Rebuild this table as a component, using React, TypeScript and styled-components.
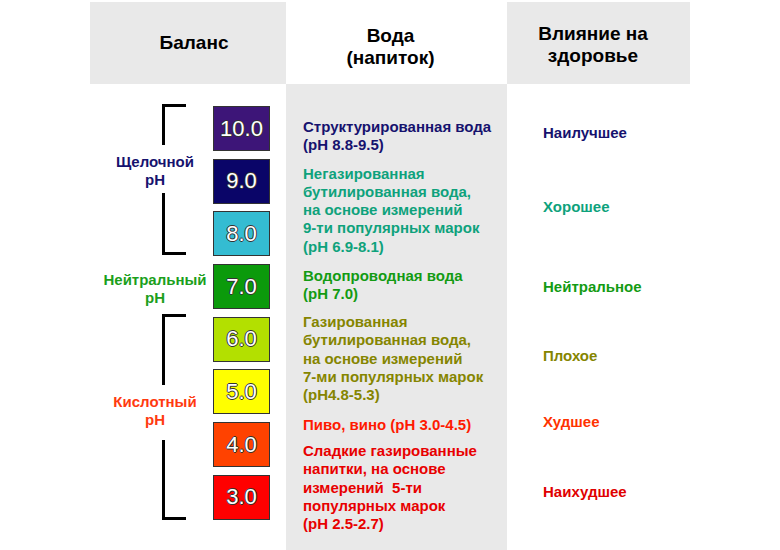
import React from 'react';
import styled, { createGlobalStyle } from 'styled-components';

const GlobalStyle = createGlobalStyle`
  * { box-sizing: border-box; }
  body {
    margin: 0;
    background: #ffffff;
    font-family: "Liberation Sans", Arial, sans-serif;
  }
`

const grey = '#e9e9e9';

const Page = styled.div`
  width: 780px;
  height: 550px;
  padding: 2px 0 0 90px;
  overflow: hidden;
`

const Table = styled.div`
  display: grid;
  grid-template-columns: 196px 221px 183px;
  grid-template-rows: 82px 466px;
`

const HeadCell = styled.div<{ $shaded?: boolean; $shift?: number; $top?: number }>`
  display: flex;
  align-items: center;
  justify-content: center;
  background: ${p => (p.$shaded ? grey : '#ffffff')};
  padding-left: ${p => Math.max(p.$shift ?? 0, 0)}px;
  padding-right: ${p => Math.max(-(p.$shift ?? 0), 0)}px;
  padding-top: ${p => p.$top ?? 0}px;
  font-size: 19px;
  line-height: 22px;
  font-weight: bold;
  color: #000;
  text-align: center;
`

const BodyCell = styled.div<{ $shaded?: boolean }>`
  background: ${p => (p.$shaded ? grey : '#ffffff')};
  display: flex;
  flex-direction: column;
`

/* ---- balance column ---- */

const BalanceBody = styled.div`
  display: flex;
  flex-direction: row;
  height: 100%;
`

const Labels = styled.div`
  width: 123px;
  display: flex;
  flex-direction: column;
  padding-top: 20px;
`

const Bracket = styled.div<{ $top?: number }>`
  display: flex;
  flex-direction: column;
  margin-top: ${p => p.$top ?? 0}px;
`

const Arm = styled.div<{ $h: number; $end: 'top' | 'bottom' }>`
  height: ${p => p.$h}px;
  margin-left: 72px;
  width: 24px;
  border-left: 3px solid #000;
  border-${p => p.$end}: 3px solid #000;
`

const GroupLabel = styled.div<{ $color: string; $h?: number; $pt?: number; $top?: number }>`
  height: ${p => (p.$h ? `${p.$h}px` : 'auto')};
  padding-top: ${p => p.$pt ?? 0}px;
  margin-top: ${p => p.$top ?? 0}px;
  padding-left: 7px;
  color: ${p => p.$color};
  font-size: 15px;
  line-height: 18px;
  font-weight: bold;
  text-align: center;
  white-space: nowrap;
`

const Boxes = styled.div`
  display: flex;
  flex-direction: column;
  gap: 7.7px;
  padding-top: 22px;
`

const PhBox = styled.div<{ $bg: string }>`
  width: 57px;
  height: 45px;
  background: ${p => p.$bg};
  border: 1px solid #333;
  display: flex;
  align-items: center;
  justify-content: center;
  color: #fff;
  font-size: 22px;
  text-shadow: -1px 0 #333, 1px 0 #333, 0 -1px #333, 0 1px #333;
`

/* ---- water & health columns ---- */

const Drink = styled.div<{ $color: string; $top: number }>`
  margin-top: ${p => p.$top}px;
  padding-left: 17px;
  color: ${p => p.$color};
  font-size: 15px;
  line-height: 18.3px;
  font-weight: bold;
  white-space: pre;
`

const Effect = styled.div<{ $color: string; $top: number }>`
  margin-top: ${p => p.$top}px;
  padding-left: 36px;
  color: ${p => p.$color};
  font-size: 15px;
  line-height: 18px;
  font-weight: bold;
`

const navy = '#16126e';
const teal = '#0ea27c';
const green = '#139b13';
const olive = '#858500';

const levels = [
  { ph: '10.0', bg: '#3d1578' },
  { ph: '9.0', bg: '#0a0568' },
  { ph: '8.0', bg: '#34bcd2' },
  { ph: '7.0', bg: '#0b9a0b' },
  { ph: '6.0', bg: '#b3e000' },
  { ph: '5.0', bg: '#ffff00' },
  { ph: '4.0', bg: '#ff4200' },
  { ph: '3.0', bg: '#ff0000' },
];

const drinks = [
  { text: 'Структурированная вода\n(pH 8.8-9.5)', color: navy, top: 34 },
  { text: 'Негазированная\nбутилированная вода,\nна основе измерений\n9-ти популярных марок\n(pH 6.9-8.1)', color: teal, top: 10 },
  { text: 'Водопроводная вода\n(pH 7.0)', color: green, top: 11 },
  { text: 'Газированная\nбутилированная вода,\nна основе измерений\n7-ми популярных марок\n(pH4.8-5.3)', color: olive, top: 9.5 },
  { text: 'Пиво, вино (pH 3.0-4.5)', color: '#ff1a00', top: 11.5 },
  { text: 'Сладкие газированные\nнапитки, на основе\nизмерений  5-ти\nпопулярных марок\n(pH 2.5-2.7)', color: '#e80000', top: 7.7 },
];

const effects = [
  { text: 'Наилучшее', color: navy, top: 40 },
  { text: 'Хорошее', color: teal, top: 56 },
  { text: 'Нейтральное', color: green, top: 62 },
  { text: 'Плохое', color: olive, top: 51 },
  { text: 'Худшее', color: '#ff3300', top: 48 },
  { text: 'Наихудшее', color: '#e00000', top: 52 },
];

export default function App() {
  return (
    <>
      <GlobalStyle />
      <Page>
        <Table>
          <HeadCell $shaded $shift={12}>Баланс</HeadCell>
          <HeadCell $shift={-12} $top={8}>Вода<br />(напиток)</HeadCell>
          <HeadCell $shaded $shift={-11} $top={4}>Влияние на<br />здоровье</HeadCell>

          <BodyCell>
            <BalanceBody>
              <Labels>
                <Bracket>
                  <Arm $h={41} $end="top" />
                  <GroupLabel $color={navy} $h={48} $pt={8}>Щелочной<br />pH</GroupLabel>
                  <Arm $h={62} $end="bottom" />
                </Bracket>
                <GroupLabel $color="#1c9f1c" $top={16}>Нейтральный<br />pH</GroupLabel>
                <Bracket $top={7}>
                  <Arm $h={71} $end="top" />
                  <GroupLabel $color="#ff3a10" $h={55} $pt={8}>Кислотный<br />pH</GroupLabel>
                  <Arm $h={80} $end="bottom" />
                </Bracket>
              </Labels>
              <Boxes>
                {levels.map(l => (
                  <PhBox key={l.ph} $bg={l.bg}>{l.ph}</PhBox>
                ))}
              </Boxes>
            </BalanceBody>
          </BodyCell>

          <BodyCell $shaded>
            {drinks.map(d => (
              <Drink key={d.text} $color={d.color} $top={d.top}>{d.text}</Drink>
            ))}
          </BodyCell>

          <BodyCell>
            {effects.map(e => (
              <Effect key={e.text} $color={e.color} $top={e.top}>{e.text}</Effect>
            ))}
          </BodyCell>
        </Table>
      </Page>
    </>
  );
}
